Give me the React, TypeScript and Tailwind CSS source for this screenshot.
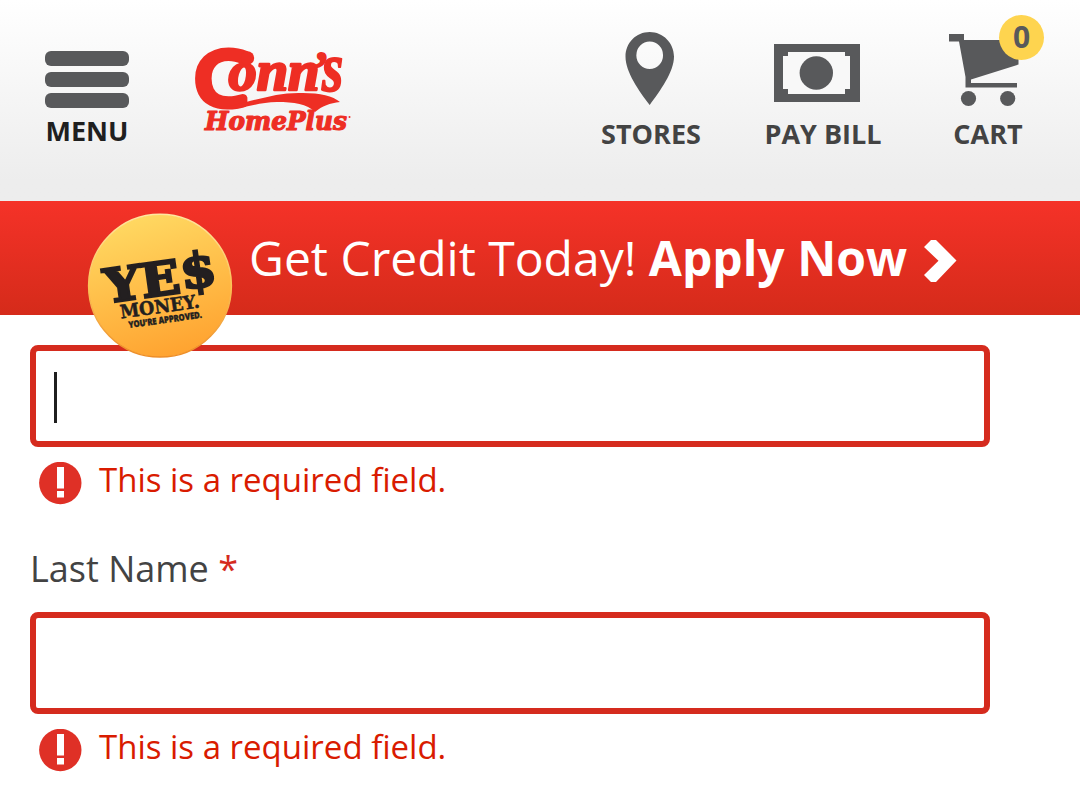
import type { ReactNode } from "react";

const sans = "font-['Open_Sans','Noto_Sans',sans-serif]";

function MenuButton() {
  return (
    <button className="ml-[45px] flex w-[84px] flex-col items-center pt-[51px]">
      <span className="flex w-full flex-col gap-[6px]">
        <span className="h-[15px] rounded-[6px] bg-[#58595b]" />
        <span className="h-[15px] rounded-[6px] bg-[#58595b]" />
        <span className="h-[15px] rounded-[6px] bg-[#58595b]" />
      </span>
      <span className="mt-[5px] whitespace-nowrap text-[27px] leading-[36px] font-bold text-[#1f1f1f]">MENU</span>
    </button>
  );
}

function Logo() {
  return (
    <svg className="ml-[66px] mt-[44px] h-[90px] w-[160px] shrink-0 overflow-visible" viewBox="195 44 160 90" fill="#ee2e24">
      <g fontFamily="'Liberation Serif', serif" fontWeight="700" fontStyle="italic" stroke="#ee2e24" strokeLinejoin="round">
        <text transform="translate(194.500 104.500) scale(1.14 1)" fontFamily="'Open Sans', sans-serif" fontWeight="400" fontStyle="normal" fontSize="74" strokeWidth="8">C</text>
        <text x="228.500" y="90" fontSize="57" strokeWidth="2.6" textLength="91" lengthAdjust="spacingAndGlyphs">onn</text>
        <text x="312" y="84" fontSize="46" strokeWidth="2">’</text>
        <text transform="translate(322 90.500) scale(0.78 1)" fontSize="70" strokeWidth="1.8">s</text>
        <text x="205" y="130.300" fontFamily="'DejaVu Serif', serif" fontSize="25.500" strokeWidth="1.2" textLength="142" lengthAdjust="spacingAndGlyphs">HomePlus</text>
      </g>
      <circle cx="247.500" cy="58" r="6.700" />
      <path d="M202 91C207 106 220 109 234 105C260 99 279 92 303 93C320 93 333 96 340 102C330 103 322 106 315 112C307 104 294 102 277 102C257 102 242 110 225 109C211 108 201 101 198 87Z" />
      <circle cx="349.500" cy="117" r="1" />
    </svg>
  );
}

function NavItem({ className, label, children }: { className: string; label: string; children: ReactNode }) {
  return (
    <a className={`flex shrink-0 flex-col items-center ${className}`}>
      <span className="flex h-[116px] w-full">{children}</span>
      <span className="whitespace-nowrap text-[27px] leading-[36px] font-bold text-[#434343]">{label}</span>
    </a>
  );
}

function Header() {
  return (
    <header className="flex h-[201px] items-start bg-linear-to-b from-white to-[#ededed] to-90%">
      <MenuButton />
      <Logo />
      <NavItem className="ml-[246px] w-[100px]" label="STORES">
        <svg className="ml-[24px] mt-[32px] h-[73px] w-[50px]" viewBox="625 32 50 73" fill="#58595b">
          <path fillRule="evenodd" d="M649.700 32C663 32 674 43 674 56.500C674 72 660 91 649.700 105C639 91 625.500 72 625.500 56.500C625.500 43 636 32 649.700 32ZM649.700 41.500A13.300 13.700 0 1 0 649.700 69A13.300 13.700 0 1 0 649.700 41.500Z" />
        </svg>
      </NavItem>
      <NavItem className="ml-[64px] w-[116px]" label="PAY BILL">
        <svg className="ml-[9px] mt-[44px] h-[58px] w-[86px]" viewBox="0 0 86 58">
          <path fill="#58595b" d="M0 0H86V58H0Z" />
          <path fill="#f8f8f8" d="M14 8H71V12H76V45H71V50H14V45H9V12H14Z" />
          <circle cx="42.300" cy="29" r="16.700" fill="#58595b" />
        </svg>
      </NavItem>
      <NavItem className="ml-[68px] w-[78px]" label="CART">
        <span className="relative flex w-full">
          <svg className="mt-[34px] h-[73px] w-[70px]" viewBox="949 34 70 73" fill="#58595b">
            <path d="M949 34H964V40H1018.500V64.500L971 79.500V83H1017V87.500H965.500V77L959 41.500H949Z" />
            <circle cx="968.500" cy="98.500" r="7.600" />
            <circle cx="1007.700" cy="98.500" r="7.600" />
          </svg>
          <span className="absolute left-[50px] top-[15px] flex size-[45px] items-center justify-center rounded-full bg-[#fed44f] pb-px text-[30px] leading-[44px] font-bold text-[#58595b]">
            0
          </span>
        </span>
      </NavItem>
    </header>
  );
}

function YesMoneyBadge() {
  return (
    <svg className="absolute left-[87px] top-[12px] size-[146px] overflow-visible" viewBox="87 213 146 146">
      <defs>
        <linearGradient id="gold" x1="0.35" y1="0" x2="0.65" y2="1">
          <stop offset="0" stopColor="#ffd962" />
          <stop offset="1" stopColor="#ffa22f" />
        </linearGradient>
        <linearGradient id="rim" x1="0" y1="0" x2="0" y2="1">
          <stop offset="0" stopColor="#ffe7a0" />
          <stop offset="0.5" stopColor="#fbc359" />
          <stop offset="1" stopColor="#ed8d27" />
        </linearGradient>
      </defs>
      <circle cx="160" cy="285.700" r="71.400" fill="url(#gold)" stroke="url(#rim)" strokeWidth="1.500" />
      <g fill="#231f20" stroke="#231f20" fontFamily="'DejaVu Serif', serif" fontWeight="700">
        <text transform="translate(106.500 303) rotate(-8)" fontSize="46.500" strokeWidth="2.400" textLength="76" lengthAdjust="spacingAndGlyphs">YE</text>
        <text transform="translate(182.500 289.500) rotate(-8)" fontSize="48" strokeWidth="2.400" textLength="36" lengthAdjust="spacingAndGlyphs">$</text>
        <text transform="translate(121 318.500) rotate(-8)" fontSize="18.500" strokeWidth="0.500" textLength="80" lengthAdjust="spacingAndGlyphs">MONEY.</text>
        <text transform="translate(129 328) rotate(-8)" fontFamily="'Open Sans', sans-serif" fontWeight="800" fontSize="9" strokeWidth="0.400" textLength="74" lengthAdjust="spacingAndGlyphs">YOU’RE APPROVED.</text>
      </g>
    </svg>
  );
}

function Banner() {
  return (
    <a className="relative flex h-[114px] items-start bg-linear-to-b from-[#f53228] to-[#d52b1a] pl-[249px] pt-[25px] text-white">
      <YesMoneyBadge />
      <span className="whitespace-pre text-[48px] leading-[64px]">
        Get Credit Today! <b className="font-bold">Apply Now</b>
      </span>
      <svg className="ml-[17px] mt-[14px] h-[42px] w-[33px] shrink-0" viewBox="0 0 33 42" fill="white">
        <path d="M7 0H12L32.500 20.500L12 42H7L0 35L14.500 20.800L0 7Z" />
      </svg>
    </a>
  );
}

function RequiredField({ focused = false }: { focused?: boolean }) {
  return (
    <div>
      <div className="flex h-[102px] w-[960px] items-start rounded-[8px] border-[6px] border-[#d52b1e] bg-white pl-[18px] pt-[21px]">
        {focused && <span className="h-[51px] w-[3px] bg-[#1f1f1f]" />}
      </div>
      <div className="flex h-[57px] items-start pl-[9px]">
        <svg className="mt-[15px] size-[43px] shrink-0" viewBox="0 0 43 43">
          <circle cx="21.300" cy="21" r="21.200" fill="#df3026" />
          <path fill="white" d="M18 5H25V26.500H18ZM18 29H25V35.500H18Z" />
        </svg>
        <p className="ml-[17px] mt-[9px] whitespace-nowrap text-[33px] leading-[48px] text-[#d91b00]">This is a required field.</p>
      </div>
    </div>
  );
}

export default function App() {
  return (
    <div className={`h-[795px] w-[1080px] overflow-hidden bg-white ${sans}`}>
      <Header />
      <Banner />
      <main className="px-[30px] pt-[30px]">
        <RequiredField focused />
        <label className="mt-[40px] mb-[18px] block text-[36px] leading-[50px] text-[#434343]">
          Last Name <span className="text-[#d52b1e]">*</span>
        </label>
        <RequiredField />
      </main>
    </div>
  );
}
